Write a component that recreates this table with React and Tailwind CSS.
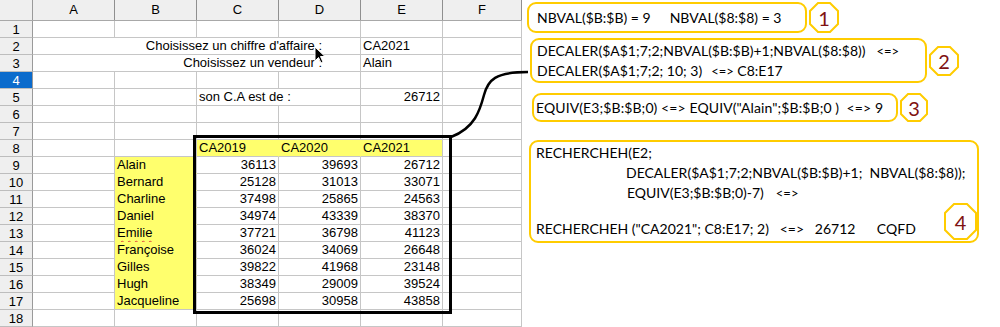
import React from "react";

const names = ["Alain", "Bernard", "Charline", "Daniel", "Emilie", "Françoise", "Gilles", "Hugh", "Jacqueline"];
const sales = [
  [36113, 39693, 26712],
  [25128, 31013, 33071],
  [37498, 25865, 24563],
  [34974, 43339, 38370],
  [37721, 36798, 41123],
  [36024, 34069, 26648],
  [39822, 41968, 23148],
  [38349, 29009, 39524],
  [25698, 30958, 43858],
];

const grid = "border-r border-b border-[#c6c6c6]";

function RowHead({ n, active }) {
  return (
    <div
      className={
        "flex h-[17px] w-[33px] shrink-0 items-center justify-center border-r border-b border-r-[#9a9a9a] border-b-[#bdbdbd] leading-none " +
        (active ? "bg-[#0b6bcc] text-white" : "bg-[#efefef] text-black")
      }
    >
      {n}
    </div>
  );
}

function Cell({ w = "w-[82px]", className = grid, align = "text-left", children }) {
  return (
    <div className={`h-[17px] shrink-0 overflow-visible whitespace-nowrap px-[2px] leading-[16px] ${w} ${className} ${align}`}>
      {children}
    </div>
  );
}

function EmptyRow({ n, active }) {
  return (
    <div className="flex">
      <RowHead n={n} active={active} />
      <Cell />
      <Cell />
      <Cell />
      <Cell />
      <Cell />
      <Cell w="w-[79px]" />
    </div>
  );
}

function Sheet() {
  const yellowCell = "bg-[#ffff6d] border-r border-b border-r-[#ffff6d] border-b-[#c6c6c6]";
  return (
    <div className="w-[522px] shrink-0 font-['Liberation_Sans',Arial,sans-serif] text-[13px] text-black">
      <div className="flex h-[21px] border-b border-[#a8a8a8] bg-[#efefef]">
        <div className="w-[33px] shrink-0 border-r border-[#9a9a9a]" />
        {["A", "B", "C", "D", "E"].map((l) => (
          <div key={l} className="flex w-[82px] shrink-0 items-center justify-center border-r border-[#8f8f8f]">
            {l}
          </div>
        ))}
        <div className="flex w-[79px] shrink-0 items-center justify-center border-r border-[#8f8f8f]">F</div>
      </div>

      <EmptyRow n={1} />
      <div className="flex">
        <RowHead n={2} />
        <Cell w="w-[328px]" align="text-right pr-[38px]">Choisissez un chiffre d'affaire :</Cell>
        <Cell>CA2021</Cell>
        <Cell w="w-[79px]" />
      </div>
      <div className="flex">
        <RowHead n={3} />
        <Cell w="w-[328px]" align="text-right pr-[38px]">Choisissez un vendeur :</Cell>
        <Cell>Alain</Cell>
        <Cell w="w-[79px]" />
      </div>
      <EmptyRow n={4} active />
      <div className="flex">
        <RowHead n={5} />
        <Cell />
        <Cell />
        <Cell w="w-[164px]">son C.A est de :</Cell>
        <Cell align="text-right">26712</Cell>
        <Cell w="w-[79px]" />
      </div>
      <EmptyRow n={6} />
      <EmptyRow n={7} />
      <div className="flex">
        <RowHead n={8} />
        <Cell />
        <Cell />
        <Cell className={yellowCell}>CA2019</Cell>
        <Cell className={yellowCell}>CA2020</Cell>
        <Cell className="bg-[#ffff6d] border-r border-b border-[#c6c6c6]">CA2021</Cell>
        <Cell w="w-[79px]" />
      </div>
      {names.map((name, i) => (
        <div key={name} className="flex">
          <RowHead n={9 + i} />
          <Cell />
          <Cell
            className={
              "bg-[#ffff6d] border-r border-b border-r-[#c6c6c6] " +
              (i === names.length - 1 ? "border-b-[#c6c6c6]" : "border-b-[#ffff6d]")
            }
          >
            {name === "Emilie" ? (
              <span className="underline decoration-[#e0443a] decoration-wavy decoration-1 underline-offset-[3px]">Emilie</span>
            ) : (
              name
            )}
          </Cell>
          {sales[i].map((v, j) => (
            <Cell key={j} align="text-right">
              {v}
            </Cell>
          ))}
          <Cell w="w-[79px]" />
        </div>
      ))}
      <EmptyRow n={18} />
    </div>
  );
}

function Octagon({ n, w, h, className }) {
  const c = Math.round(w * 0.3);
  const pts = [
    [c, 1], [w - c, 1], [w - 1, c], [w - 1, h - c],
    [w - c, h - 1], [c, h - 1], [1, h - c], [1, c],
  ]
    .map((p) => p.join(","))
    .join(" ");
  return (
    <div className={`flex shrink-0 items-center justify-center ${className}`}>
      <svg width={w} height={h} className="absolute left-0 top-0">
        <polygon points={pts} fill="white" stroke="#ffcc00" strokeWidth="2" />
      </svg>
      <span className="relative text-[20px] leading-none text-[#7f1212]">{n}</span>
    </div>
  );
}

function Notes() {
  const box = "rounded-[9px] border-2 border-[#ffcc00] bg-white";
  return (
    <div className="flex flex-1 flex-col font-['Lato','Open_Sans',sans-serif] text-[14px] text-black">
      <div className="ml-[5px] mt-[2px] flex items-start gap-[2px]">
        <div className={`${box} flex h-[31px] w-[280px] items-center gap-[19px] pl-[8px]`}>
          <span>NBVAL($B:$B) = 9</span>
          <span>NBVAL($8:$8) = 3</span>
        </div>
        <Octagon n="1" w={30} h={31} className="relative w-[30px] h-[31px]" />
      </div>

      <div className="ml-[8px] mt-[5px] flex items-center gap-[2px]">
        <div className={`${box} flex h-[45px] w-[397px] flex-col justify-center pl-[5px] leading-[20px]`}>
          <div>
            DECALER($A$1;7;2;NBVAL($B:$B)+1;NBVAL($8:$8))<span className="ml-[11px] text-[13px]">&lt;=&gt;</span>
          </div>
          <div>
            DECALER($A$1;7;2; 10; 3)<span className="ml-[9px] text-[13px]">&lt;=&gt;</span> C8:E17
          </div>
        </div>
        <Octagon n="2" w={30} h={30} className="relative w-[30px] h-[30px]" />
      </div>

      <div className="ml-[10px] mt-[10px] flex items-start gap-[2px]">
        <div className={`${box} flex h-[29px] w-[366px] items-center pl-[2px] tracking-[0.1px]`}>
          EQUIV(E3;$B:$B;0) &lt;=&gt; EQUIV("Alain";$B:$B;0 )&nbsp; &lt;=&gt; 9
        </div>
        <Octagon n="3" w={28} h={29} className="relative w-[28px] h-[29px]" />
      </div>

      <div className={`${box} relative ml-[7px] mt-[18px] h-[103px] w-[450px] pl-[5px] pt-[1px] leading-[20px]`}>
        <div>RECHERCHEH(E2;</div>
        <div className="pl-[90px]">DECALER($A$1;7;2;NBVAL($B:$B)+1;&nbsp; NBVAL($8:$8));</div>
        <div className="pl-[91px]">
          EQUIV(E3;$B:$B;0)-7)<span className="ml-[12px] text-[13px]">&lt;=&gt;</span>
        </div>
        <div className="mt-[16px] whitespace-pre">
          RECHERCHEH ("CA2021"; C8:E17; 2)   &lt;=&gt;   26712      CQFD
        </div>
        <Octagon n="4" w={33} h={37} className="absolute right-[0px] top-[61px] w-[33px] h-[37px]" />
      </div>
    </div>
  );
}

export default function App() {
  return (
    <div className="relative flex h-[327px] w-[1000px] overflow-hidden bg-white">
      <Sheet />
      <Notes />
      <svg width="1000" height="327" className="pointer-events-none absolute left-0 top-0">
        <rect x="194.5" y="136.5" width="256" height="176" fill="none" stroke="black" strokeWidth="3" />
        <path d="M451,137 C475,128 480,110 484,95 C488,80 495,72 528,72" fill="none" stroke="black" strokeWidth="2.5" />
        <path d="M315,47 L315,61 L318.5,57.5 L321,63 L323,62 L320.5,56.5 L325,56.5 Z" fill="black" stroke="white" strokeWidth="1" />
      </svg>
    </div>
  );
}
